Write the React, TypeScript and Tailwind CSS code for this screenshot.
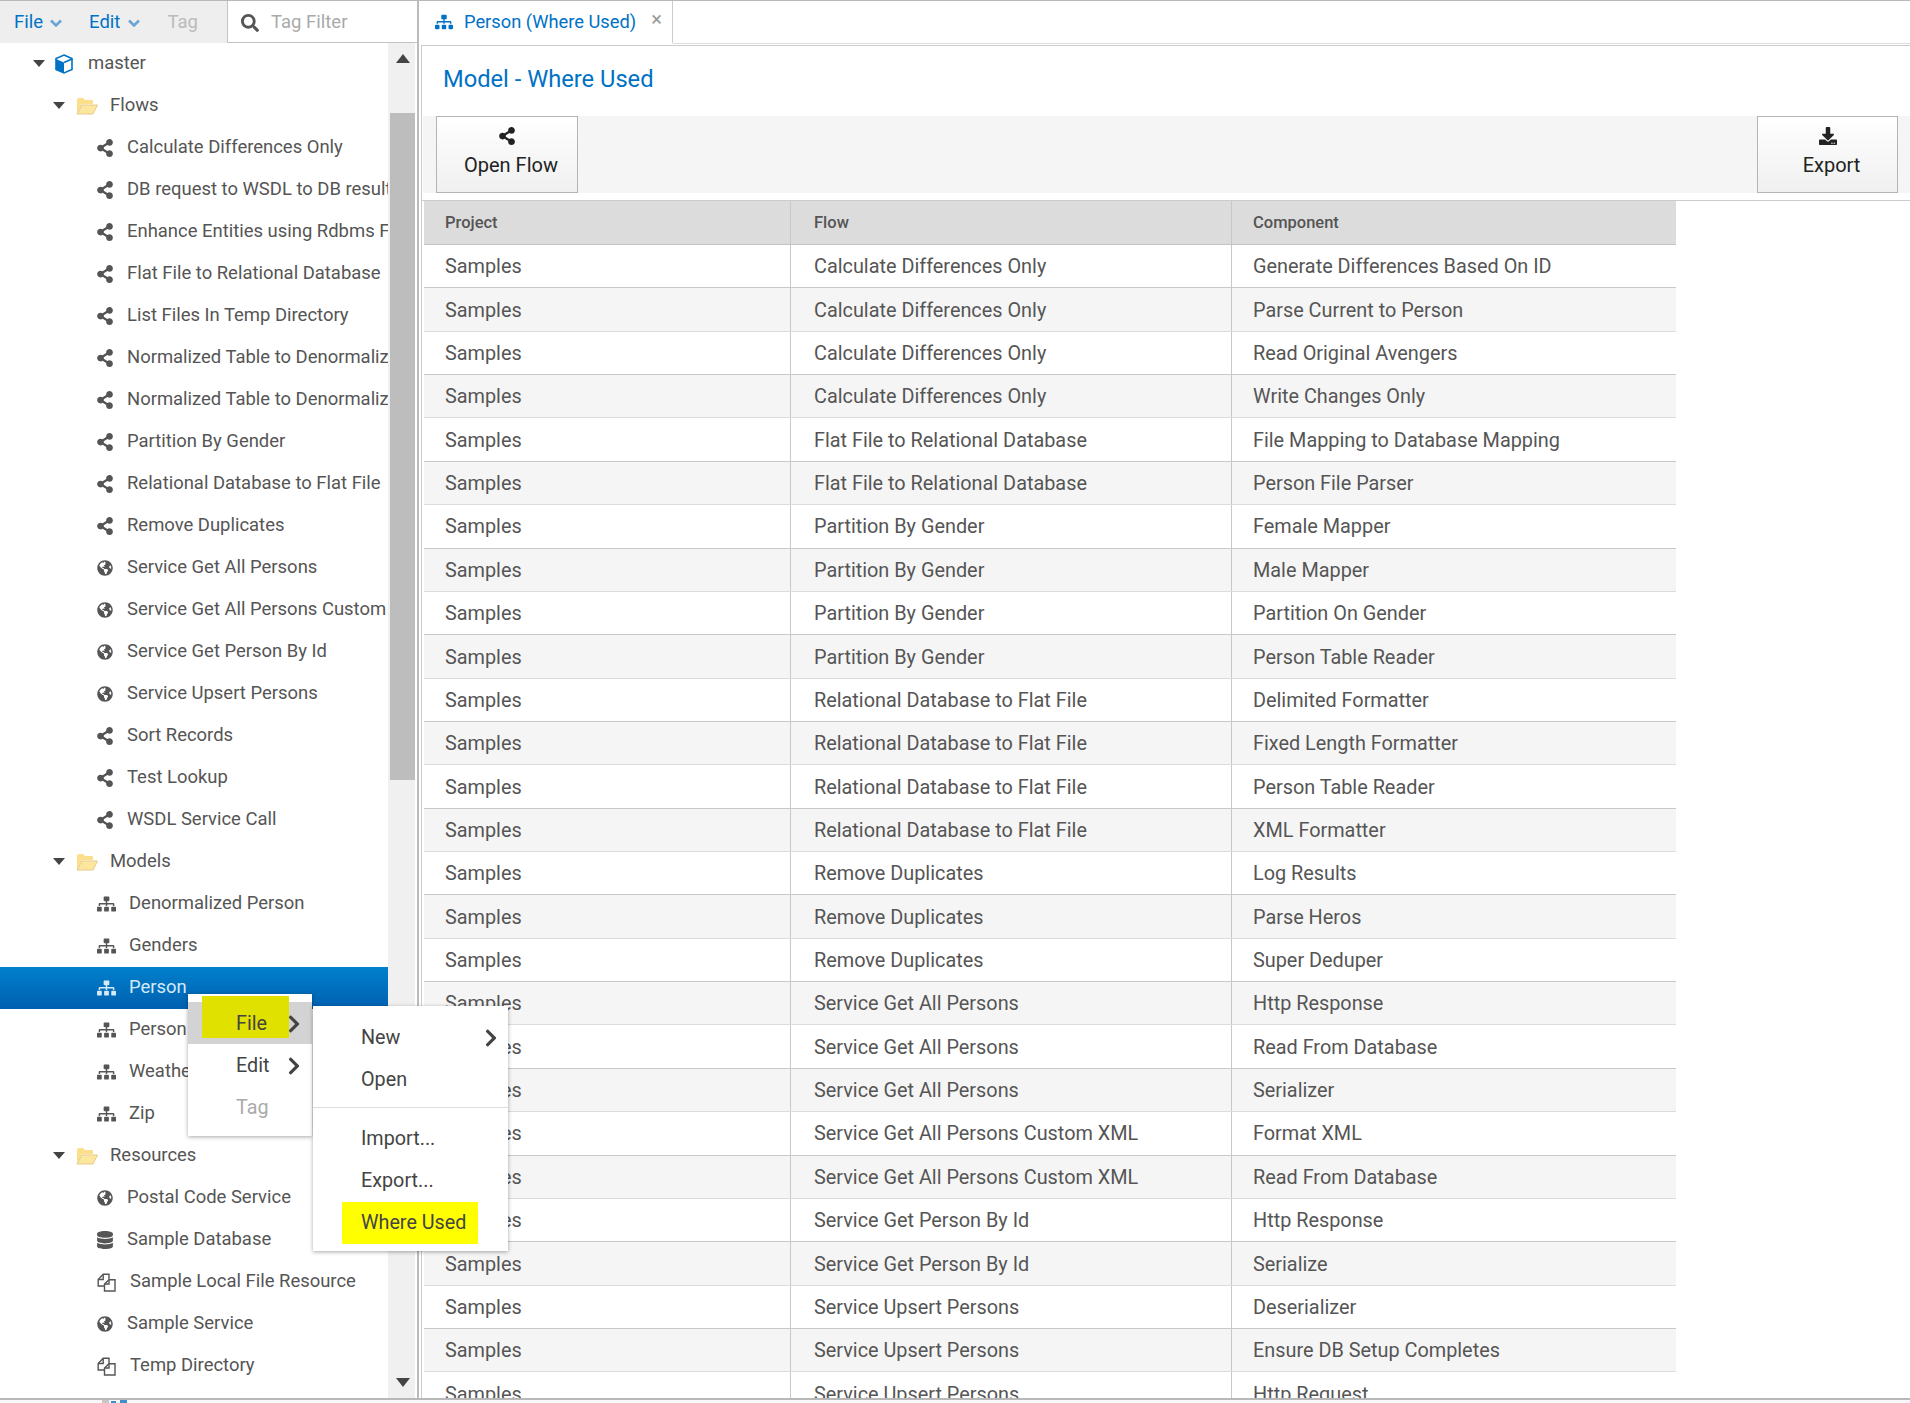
import React from 'react'
import { FaShareAlt, FaSitemap, FaGlobeAmericas, FaDatabase, FaSearch, FaDownload, FaChevronRight } from 'react-icons/fa'

type Kind = 'flow' | 'service' | 'model' | 'db' | 'file'

const flows: [Kind, string][] = [
    ['flow', 'Calculate Differences Only'],
    ['flow', 'DB request to WSDL to DB results'],
    ['flow', 'Enhance Entities using Rdbms Fields'],
    ['flow', 'Flat File to Relational Database'],
    ['flow', 'List Files In Temp Directory'],
    ['flow', 'Normalized Table to Denormalized'],
    ['flow', 'Normalized Table to Denormalized'],
    ['flow', 'Partition By Gender'],
    ['flow', 'Relational Database to Flat File'],
    ['flow', 'Remove Duplicates'],
    ['service', 'Service Get All Persons'],
    ['service', 'Service Get All Persons Custom'],
    ['service', 'Service Get Person By Id'],
    ['service', 'Service Upsert Persons'],
    ['flow', 'Sort Records'],
    ['flow', 'Test Lookup'],
    ['flow', 'WSDL Service Call'],
]

const models: string[] = ['Denormalized Person', 'Genders', 'Person', 'Person Table', 'Weather', 'Zip']

const resources: [Kind, string][] = [
    ['service', 'Postal Code Service'],
    ['db', 'Sample Database'],
    ['file', 'Sample Local File Resource'],
    ['service', 'Sample Service'],
    ['file', 'Temp Directory'],
]

const rows: [string, string][] = [
    ['Calculate Differences Only', 'Generate Differences Based On ID'],
    ['Calculate Differences Only', 'Parse Current to Person'],
    ['Calculate Differences Only', 'Read Original Avengers'],
    ['Calculate Differences Only', 'Write Changes Only'],
    ['Flat File to Relational Database', 'File Mapping to Database Mapping'],
    ['Flat File to Relational Database', 'Person File Parser'],
    ['Partition By Gender', 'Female Mapper'],
    ['Partition By Gender', 'Male Mapper'],
    ['Partition By Gender', 'Partition On Gender'],
    ['Partition By Gender', 'Person Table Reader'],
    ['Relational Database to Flat File', 'Delimited Formatter'],
    ['Relational Database to Flat File', 'Fixed Length Formatter'],
    ['Relational Database to Flat File', 'Person Table Reader'],
    ['Relational Database to Flat File', 'XML Formatter'],
    ['Remove Duplicates', 'Log Results'],
    ['Remove Duplicates', 'Parse Heros'],
    ['Remove Duplicates', 'Super Deduper'],
    ['Service Get All Persons', 'Http Response'],
    ['Service Get All Persons', 'Read From Database'],
    ['Service Get All Persons', 'Serializer'],
    ['Service Get All Persons Custom XML', 'Format XML'],
    ['Service Get All Persons Custom XML', 'Read From Database'],
    ['Service Get Person By Id', 'Http Response'],
    ['Service Get Person By Id', 'Serialize'],
    ['Service Upsert Persons', 'Deserializer'],
    ['Service Upsert Persons', 'Ensure DB Setup Completes'],
    ['Service Upsert Persons', 'Http Request'],
]

function Caret() {
    return (
        <svg width="12" height="8" viewBox="0 0 12 8" className="shrink-0">
            <polygon points="0,0 12,0 6,7" fill="#444" />
        </svg>
    )
}

function MenuChevron() {
    return (
        <svg width="12" height="8" viewBox="0 0 12 8" className="shrink-0" fill="none" stroke="#6aa5d6" strokeWidth="2.6">
            <path d="M1 1.5l5 5 5-5" />
        </svg>
    )
}

function FolderIcon() {
    return (
        <svg width="22" height="18" viewBox="0 0 22 18" className="shrink-0">
            <path d="M1 16V3a2 2 0 0 1 2-2h4l2 2h7a1 1 0 0 1 1 1v3H6L1 16z" fill="#fbdf8a" />
            <path d="M1 17l5-9h15.5l-4.5 9H1z" fill="#fce79f" stroke="#e6c98a" strokeWidth="1" />
        </svg>
    )
}

function CubeIcon() {
    return (
        <svg width="18" height="20" viewBox="0 0 18 20" className="shrink-0">
            <path d="M9 1l8 3.5v11L9 19l-8-3.5v-11L9 1z" fill="#fff" stroke="#0072c6" strokeWidth="1.6" />
            <path d="M1 5l8 3.5V19l-8-3.5V5z" fill="#0072c6" />
            <path d="M9 8.5l8-3.5" stroke="#0072c6" strokeWidth="1.6" />
        </svg>
    )
}

function FilesIcon() {
    return (
        <svg width="19" height="19" viewBox="0 0 19 19" fill="none" stroke="#555" strokeWidth="1.4" className="shrink-0">
            <path d="M7.5 13H1.2V6.5L6.2 1.2H12V6.5" />
            <path d="M6.2 1.5V6.5H1.5" />
            <path d="M12 6.8H18V18H7.5V11L12 6.8z" />
            <path d="M12 7V11H8" />
        </svg>
    )
}

function LeafRow({ kind, label }: { kind: Kind; label: string }) {
    return (
        <div className="flex h-[42px] items-center pl-[97px] whitespace-nowrap overflow-hidden">
            {kind === 'flow' && <FaShareAlt className="w-[16px] h-[18px] shrink-0 text-[#555]" />}
            {kind === 'service' && <FaGlobeAmericas className="w-[16px] h-[16px] shrink-0 text-[#555]" />}
            {kind === 'db' && <FaDatabase className="w-[16px] h-[18px] shrink-0 text-[#555]" />}
            {kind === 'file' && <FilesIcon />}
            <span className="ml-[14px]">{label}</span>
        </div>
    )
}

function ModelRow({ label, active }: { label: string; active?: boolean }) {
    return (
        <div
            className={
                active
                    ? 'flex h-[42px] items-center pl-[97px] whitespace-nowrap overflow-hidden bg-gradient-to-b from-[#0080cc] to-[#0060b0] text-[#d5e9f8]'
                    : 'flex h-[42px] items-center pl-[97px] whitespace-nowrap overflow-hidden'
            }
        >
            <FaSitemap className={active ? 'w-[19px] h-[16px] shrink-0 text-[#d5e9f8]' : 'w-[19px] h-[16px] shrink-0 text-[#555]'} />
            <span className="ml-[13px]">{label}</span>
        </div>
    )
}

function FolderRow({ label }: { label: string }) {
    return (
        <div className="flex h-[42px] items-center pl-[53px]">
            <Caret />
            <span className="ml-[11px]"><FolderIcon /></span>
            <span className="ml-[12px]">{label}</span>
        </div>
    )
}

function Tree() {
    return (
        <div className="relative flex-1 min-h-0 flex overflow-hidden">
            <div className="w-[388px] shrink-0 overflow-hidden text-[18.45px] text-[#555]">
                <div className="flex h-[42px] items-center pl-[33px]">
                    <Caret />
                    <span className="ml-[10px]"><CubeIcon /></span>
                    <span className="ml-[15px]">master</span>
                </div>
                <FolderRow label="Flows" />
                {flows.map(([kind, label], i) => (
                    <LeafRow key={i} kind={kind} label={label} />
                ))}
                <FolderRow label="Models" />
                {models.map((label) => (
                    <ModelRow key={label} label={label} active={label === 'Person'} />
                ))}
                <FolderRow label="Resources" />
                {resources.map(([kind, label]) => (
                    <LeafRow key={label} kind={kind} label={label} />
                ))}
            </div>
            <div className="w-[27px] shrink-0 bg-[#f0f0f0] flex flex-col items-center pl-[2px]">
                <svg width="14" height="9" viewBox="0 0 14 9" className="mt-[11px] shrink-0">
                    <polygon points="7,0 14,9 0,9" fill="#444" />
                </svg>
                <div className="w-full h-[667px] mt-[50px] bg-[#bdbdbd]" />
                <svg width="14" height="9" viewBox="0 0 14 9" className="mt-auto mb-[11px] shrink-0">
                    <polygon points="0,0 14,0 7,9" fill="#444" />
                </svg>
            </div>
        </div>
    )
}

function MenuRow({ label, muted, highlight, arrow, yellow }: { label: string; muted?: boolean; highlight?: boolean; arrow?: boolean; yellow?: boolean }) {
    return (
        <div className={highlight ? 'relative flex h-[42px] items-center pl-[48px] pt-[2px] bg-[#d3d3d3]' : 'relative flex h-[42px] items-center pl-[48px] pt-[2px]'}>
            {yellow && <div className="absolute left-[14px] top-[-6px] w-[87px] h-[42px] bg-[#e1e100]" />}
            <span className={muted ? 'relative text-[#aaa]' : 'relative text-[#444]'}>{label}</span>
            {arrow && <FaChevronRight className="absolute left-[98px] w-[16px] h-[20px] text-[#444]" />}
        </div>
    )
}

function ContextMenus() {
    return (
        <>
            <div className="absolute left-[188px] top-[994px] z-10 w-[124px] h-[142px] pt-[8px] bg-white shadow-[0_1px_4px_rgba(0,0,0,0.35)] text-[19.75px]">
                <MenuRow label="File" highlight arrow yellow />
                <MenuRow label="Edit" arrow />
                <MenuRow label="Tag" muted />
            </div>
            <div className="absolute left-[313px] top-[1006px] z-10 w-[195px] h-[245px] bg-white shadow-[0_1px_4px_rgba(0,0,0,0.35)] text-[19.75px] text-[#444] pt-[11px]">
                <div className="relative flex h-[42px] items-center pl-[48px]">
                    New
                    <FaChevronRight className="absolute left-[170px] w-[16px] h-[20px] text-[#444]" />
                </div>
                <div className="flex h-[42px] items-center pl-[48px]">Open</div>
                <div className="h-[1px] mt-[6px] mb-[10px] bg-[#ddd]" />
                <div className="flex h-[42px] items-center pl-[48px]">Import...</div>
                <div className="flex h-[42px] items-center pl-[48px]">Export...</div>
                <div className="flex h-[42px] items-center ml-[29px] w-[136px] pl-[19px] bg-[#ffff00]">Where Used</div>
            </div>
        </>
    )
}

function ToolButton({ icon, label, width }: { icon: React.ReactNode; label: string; width: string }) {
    return (
        <button className={`${width} h-[77px] flex flex-col items-center border border-[#b4b4b4] bg-gradient-to-b from-white to-[#f0f0f0] text-[20px] text-[#222]`}>
            <span className="mt-[8px] h-[22px] flex items-center">{icon}</span>
            <span className="mt-[6px] ml-[8px] leading-[24px]">{label}</span>
        </button>
    )
}

function WhereUsedTable() {
    return (
        <div className="w-[1252px] ml-[2px] text-[19.85px] text-[#555]">
            <div className="flex h-[44px] items-center bg-[#dcdcdc] border-b border-[#c4c4c4] text-[16.5px] font-medium text-[#555]">
                <div className="w-[367px] h-full flex items-center pl-[21px] pt-[2px] border-r border-[#c8c8c8]">Project</div>
                <div className="w-[441px] h-full flex items-center pl-[23px] pt-[2px] border-r border-[#c8c8c8]">Flow</div>
                <div className="flex-1 h-full flex items-center pl-[21px] pt-[2px]">Component</div>
            </div>
            {rows.map(([flow, component], i) => (
                <div key={i} className={i % 2 === 0 ? 'flex h-[43.37px] items-center bg-white border-b border-[#c8c8c8]' : 'flex h-[43.37px] items-center bg-[#f5f5f5] border-b border-[#dcdcdc]'}>
                    <div className="w-[367px] h-full flex items-center pl-[21px] pt-[2px] border-r border-[#c8c8c8]">Samples</div>
                    <div className="w-[441px] h-full flex items-center pl-[23px] pt-[2px] border-r border-[#c8c8c8]">{flow}</div>
                    <div className="flex-1 h-full flex items-center pl-[21px] pt-[2px]">{component}</div>
                </div>
            ))}
        </div>
    )
}

export default function App() {
    return (
        <div className="relative w-[1910px] h-[1403px] overflow-hidden bg-[#f8f8f8] font-['Roboto',sans-serif]">
            <div className="flex h-[1400px] bg-white border-t border-[#b8b8b8] border-b-2 border-b-[#b8b8b8] overflow-hidden">
                {/* Left side */}
                <div className="w-[419px] shrink-0 flex flex-col border-r-2 border-[#bbb]">
                    <div className="flex h-[42px] shrink-0">
                        <div className="w-[227px] pt-[2px] bg-[#eee] flex items-center text-[18.5px] text-[#0072c6]">
                            <span className="ml-[14px]">File</span>
                            <span className="ml-[7px]"><MenuChevron /></span>
                            <span className="ml-[27px]">Edit</span>
                            <span className="ml-[8px]"><MenuChevron /></span>
                            <span className="ml-[27px] text-[#bbb]">Tag</span>
                        </div>
                        <div className="flex-1 pt-[2px] flex items-center border-l border-b border-[#c4c4c4] text-[18.5px] text-[#aaa]">
                            <FaSearch className="ml-[13px] w-[18px] h-[18px] text-[#555]" />
                            <span className="ml-[12px]">Tag Filter</span>
                        </div>
                    </div>
                    <Tree />
                </div>

                {/* Right side */}
                <div className="flex-1 min-w-0 flex flex-col">
                    <div className="h-[44px] shrink-0 flex">
                        <div className="w-[254px] h-[42px] flex items-center border-r border-[#ccc] text-[18.3px] text-[#0072c6] pl-[16px]">
                            <FaSitemap className="w-[18px] h-[16px]" />
                            <span className="ml-[11px]">Person (Where Used)</span>
                            <span className="ml-[15px] -mt-[6px] text-[#999] text-[20px] leading-none">×</span>
                        </div>
                        <div className="flex-1 h-[43px] border-b border-[#ddd]" />
                    </div>
                    <div className="flex-1 min-h-0 ml-[2px] border-l border-t border-[#ccc] overflow-hidden">
                        <h1 className="h-[70px] pl-[21px] pb-[2px] flex items-center text-[23.7px] text-[#0072c6]">Model - Where Used</h1>
                        <div className="flex justify-between h-[77px] ml-[1px] pl-[13px] pr-[12px] bg-[#f5f5f5]">
                            <ToolButton width="w-[142px]" icon={<FaShareAlt className="w-[18px] h-[18px] text-[#222]" />} label="Open Flow" />
                            <ToolButton width="w-[141px]" icon={<FaDownload className="w-[18px] h-[18px] text-[#222]" />} label="Export" />
                        </div>
                        <div className="mt-[7px] border-t border-[#ccc]">
                            <WhereUsedTable />
                        </div>
                    </div>
                </div>
            </div>
            {/* top of the next tree icon, just under the bottom edge */}
            <svg width="30" height="3" viewBox="0 0 30 3" className="ml-[100px] block">
                <rect x="2" y="0" width="7" height="3" fill="#c8c8c8" />
                <rect x="11" y="1" width="5" height="2" fill="#3f8fd0" />
                <rect x="20" y="0" width="7" height="3" fill="#3f8fd0" />
            </svg>
            <ContextMenus />
        </div>
    )
}
